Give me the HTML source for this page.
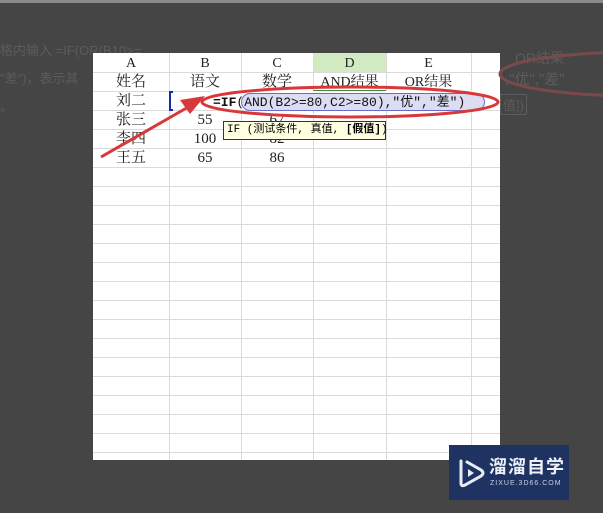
<!DOCTYPE html>
<html><head><meta charset="utf-8"><style>
*{margin:0;padding:0;box-sizing:border-box}
body{width:603px;height:513px;overflow:hidden;background:#454545;position:relative;font-family:"Liberation Serif","Noto Serif CJK SC","Noto Sans CJK SC",serif}
.abs{position:absolute}
.ghost{color:#5c5c5c;font-family:"Liberation Sans","Noto Sans CJK SC",sans-serif;font-size:13px;white-space:nowrap}
#panel{left:93px;top:53px;width:407px;height:407px;background:#fff;overflow:hidden}
.vl{position:absolute;top:0;bottom:0;width:1px;background:#dadada}
.hl{position:absolute;left:0;right:0;height:1px;background:#dadada}
.c{position:absolute;height:19px;line-height:21px;text-align:center;font-size:15px;color:#222;white-space:nowrap}
</style></head><body>
<div class="abs" style="left:0;top:0;width:603px;height:3px;background:#8a8a8a"></div>
<div class="abs ghost" style="left:0;top:40px">格内输入 =IF(OR(B10&gt;=</div>
<div class="abs ghost" style="left:0;top:68px">"差")，表示其</div>
<div class="abs ghost" style="left:0;top:96px">。</div>
<div class="abs ghost" style="left:515px;top:48px;font-size:14px">OR结果</div>
<div class="abs ghost" style="left:505px;top:68px;font-size:15px">,"优","差"</div>
<div class="abs ghost" style="left:500px;top:94px;font-size:13px;border:1px solid #5c5c5c;padding:0 2px">值])</div>
<div id="panel" class="abs">
  <div class="abs" style="left:220px;top:0;width:73px;height:19px;background:#d3ebc2"></div>
  <div class="vl" style="left:76px"></div><div class="vl" style="left:148px"></div>
  <div class="vl" style="left:220px"></div><div class="vl" style="left:293px"></div>
  <div class="vl" style="left:378px"></div>
  <div class="hl" style="top:19px"></div><div class="hl" style="top:38px"></div>
  <div class="hl" style="top:57px"></div><div class="hl" style="top:76px"></div>
  <div class="hl" style="top:95px"></div><div class="hl" style="top:114px"></div>
  <div class="hl" style="top:133px"></div><div class="hl" style="top:152px"></div>
  <div class="hl" style="top:171px"></div><div class="hl" style="top:190px"></div>
  <div class="hl" style="top:209px"></div><div class="hl" style="top:228px"></div>
  <div class="hl" style="top:247px"></div><div class="hl" style="top:266px"></div>
  <div class="hl" style="top:285px"></div><div class="hl" style="top:304px"></div>
  <div class="hl" style="top:323px"></div><div class="hl" style="top:342px"></div>
  <div class="hl" style="top:361px"></div><div class="hl" style="top:380px"></div>
  <div class="hl" style="top:399px"></div>
  <div class="c" style="left:0;top:0;width:76px;font-size:14px">A</div>
  <div class="c" style="left:76px;top:0;width:72px;font-size:14px">B</div>
  <div class="c" style="left:148px;top:0;width:72px;font-size:14px">C</div>
  <div class="c" style="left:220px;top:0;width:73px;font-size:14px">D</div>
  <div class="c" style="left:293px;top:0;width:85px;font-size:14px">E</div>
  <div class="c" style="left:0;top:19px;width:76px">姓名</div>
  <div class="c" style="left:76px;top:19px;width:72px">语文</div>
  <div class="c" style="left:148px;top:19px;width:72px">数学</div>
  <div class="c" style="left:220px;top:19px;width:73px;font-size:14px">AND结果</div>
  <div class="c" style="left:293px;top:19px;width:85px;font-size:14px">OR结果</div>
  <div class="abs" style="left:220px;top:37px;width:73px;height:2px;background:#3a8a3a"></div>
  <div class="c" style="left:0;top:38px;width:76px">刘二</div>
  <div class="c" style="left:0;top:57px;width:76px">张三</div>
  <div class="c" style="left:0;top:76px;width:76px">李四</div>
  <div class="c" style="left:0;top:95px;width:76px">王五</div>
  <div class="c" style="left:76px;top:57px;width:72px">55</div>
  <div class="c" style="left:76px;top:76px;width:72px">100</div>
  <div class="c" style="left:76px;top:95px;width:72px">65</div>
  <div class="c" style="left:148px;top:57px;width:72px">67</div>
  <div class="c" style="left:148px;top:76px;width:72px">82</div>
  <div class="c" style="left:148px;top:95px;width:72px">86</div>
  <div class="abs" style="left:76px;top:38px;width:4px;height:20px;border:2px solid #1a2aa0;border-right:none"></div>
  <div class="abs" style="left:118px;top:38px;width:360px;height:19px;background:#fff"></div>
  <div class="abs" style="left:148px;top:40px;width:244px;height:18px;background:#dcdcf3;border:1px solid #6b6bcc;border-radius:9px"></div>
  <div class="abs" style="left:120px;top:40px;height:19px;line-height:19px;font-size:13px;font-family:'Liberation Mono','Noto Sans CJK SC',monospace;color:#111;white-space:nowrap"><b>=IF</b>(AND(B2&gt;=80,C2&gt;=80),"优","差")</div>
  <div class="abs" style="left:130px;top:68px;width:163px;height:19px;background:#ffffe1;border:1px solid #333;font-size:11px;line-height:17px;padding-left:3px;white-space:nowrap;font-family:'Liberation Mono','Noto Sans CJK SC',monospace">IF (测试条件, 真值, <b>[假值]</b>)</div>
</div>
<svg class="abs" style="left:0;top:0" width="603" height="513">
  <ellipse cx="640" cy="74" rx="140" ry="22" fill="none" stroke="#7a4a4a" stroke-width="3"/>
  <ellipse cx="350" cy="102" rx="148" ry="15" fill="none" stroke="#d9383a" stroke-width="3"/>
  <line x1="101" y1="157" x2="190" y2="106" stroke="#d9383a" stroke-width="3"/>
  <polygon points="205,96 180,100 190,114" fill="#d9383a"/>
</svg>
<div class="abs" style="left:449px;top:445px;width:120px;height:55px;background:#1f3363">
  <svg class="abs" style="left:8px;top:12px" width="30" height="32" viewBox="0 0 30 32">
    <path d="M4 4 V26 Q4 30 8 28 L24 19 Q28 16 24 13 L10 5" fill="none" stroke="#e8ecf4" stroke-width="3" stroke-linecap="round"/>
    <path d="M11 12 V20 L17 16 Z" fill="#e8ecf4"/>
  </svg>
  <div class="abs" style="left:40px;top:10px;color:#eef1f7;font-size:18px;font-weight:bold;letter-spacing:1px;font-family:'Noto Sans CJK SC',sans-serif;line-height:22px;white-space:nowrap">溜溜自学</div>
  <div class="abs" style="left:41px;top:35px;color:#c8cfe0;font-size:7px;letter-spacing:1px;font-family:'Liberation Sans',sans-serif;white-space:nowrap">ZIXUE.3D66.COM</div>
</div>
</body></html>
